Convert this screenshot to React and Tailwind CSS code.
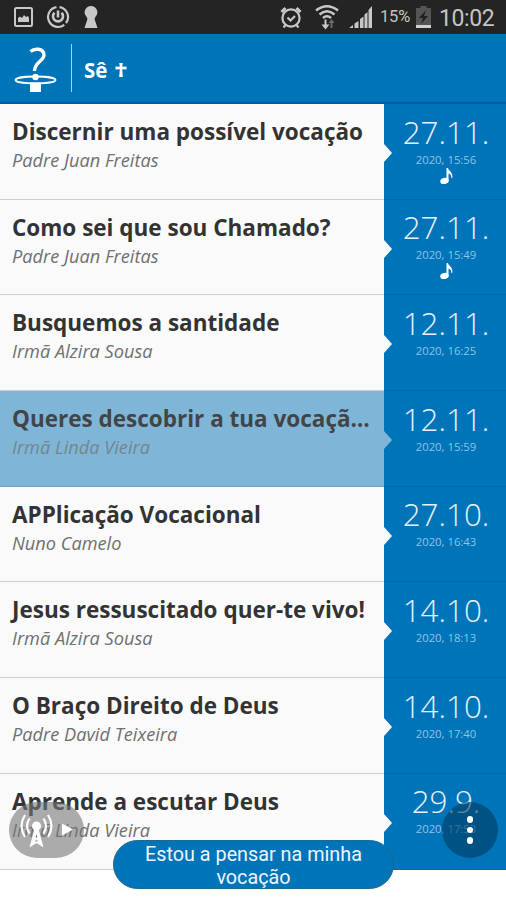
const items = [
  { title: "Discernir uma possível vocação", author: "Padre Juan Freitas", day: "27.11.", time: "2020, 15:56", audio: true },
  { title: "Como sei que sou Chamado?", author: "Padre Juan Freitas", day: "27.11.", time: "2020, 15:49", audio: true },
  { title: "Busquemos a santidade", author: "Irmã Alzira Sousa", day: "12.11.", time: "2020, 16:25" },
  { title: "Queres descobrir a tua vocação?", author: "Irmã Linda Vieira", day: "12.11.", time: "2020, 15:59", selected: true },
  { title: "APPlicação Vocacional", author: "Nuno Camelo", day: "27.10.", time: "2020, 16:43" },
  { title: "Jesus ressuscitado quer-te vivo!", author: "Irmã Alzira Sousa", day: "14.10.", time: "2020, 18:13" },
  { title: "O Braço Direito de Deus", author: "Padre David Teixeira", day: "14.10.", time: "2020, 17:40" },
  { title: "Aprende a escutar Deus", author: "Irmã Linda Vieira", day: "29.9.", time: "2020, 17:53" },
];

function StatusBar() {
  return (
    <div className="flex h-[34px] items-center bg-[#242424] pl-[14px] pr-3 font-['Roboto',sans-serif] text-[#c4c4c4]">
      <svg className="h-[22px] w-5" viewBox="0 0 20 22" fill="none">
        <rect x="1" y="2" width="17" height="18" rx="1.5" stroke="#c8c8c8" strokeWidth="2" />
        <path d="M4 16v-4l2-1.500 2 1.500 2-3 2 2 2-1 1 2v4z" fill="#c8c8c8" />
      </svg>
      <svg className="ml-3 h-6 w-6" viewBox="0 0 24 24" fill="none" stroke="#c8c8c8" strokeWidth="2.2">
        <path d="M13.5 2.1A10 10 0 0 1 20 18M18.3 19.8A10 10 0 1 1 10.5 2.1" />
        <path d="M8.500 7.800a5 5 0 1 0 7 0M12 5.500v7" strokeWidth="2.600" />
      </svg>
      <svg className="ml-[13px] h-6 w-4" viewBox="0 0 16 24" fill="#c8c8c8">
        <path d="M8 1a6.300 6.300 0 0 0-4.500 10.700L4.500 14 1.500 23h13l-3-9 1-2.300A6.300 6.300 0 0 0 8 1z" />
      </svg>
      <div className="ml-auto flex items-center">
        <svg className="h-6 w-[22px]" viewBox="0 0 22 24" fill="none" stroke="#c8c8c8" strokeWidth="2.2">
          <circle cx="11" cy="13" r="8.600" />
          <path d="M7.500 12.500l3 3 4.500-4.500M5.500 20l-2 2.500M16.500 20l2 2.500" />
          <path d="M1.500 7l4-4M20.500 7l-4-4" strokeWidth="3" />
        </svg>
        <svg className="ml-[13px] h-[26px] w-6" viewBox="0 0 24 26" fill="none">
          <path d="M1 6.500Q12-2 23 6.500M4.500 10.500Q12 4 19.500 10.500M8 14Q12 10.500 16 14" stroke="#c8c8c8" strokeWidth="2.500" />
          <path d="M9.500 15.500v5H6.500l4 5 4-5h-3v-5z" fill="#c8c8c8" />
          <path d="M15.500 24v-5h-2l3-4 3 4h-2v5z" fill="#6b6b6b" />
        </svg>
        <svg className="ml-[10px] h-6 w-[23px]" viewBox="0 0 23 24" fill="#c8c8c8">
          <path d="M0 23l4-3v3zM5.500 18.500l4-2.500v7h-4zM11 14l3.500-2.500V23H11zM15.500 9.500l3-2.500v16h-3zM19.500 5L23 1v22h-3.500z" />
        </svg>
        <span className="ml-[8px] mt-px w-[32px] whitespace-nowrap text-[16.5px] leading-none tracking-[-0.2px]">15%</span>
        <svg className="ml-1 h-6 w-[15px]" viewBox="0 0 15 24">
          <path d="M4.500 1h6v2H15v20H0V3h4.500z" fill="#555" />
          <path d="M10 5l-7 8h4l-2 6 7-8H8z" fill="#1f1f1f" />
          <path d="M0 20h15v3H0z" fill="#d0d0d0" />
        </svg>
        <span className="ml-2 mt-0.5 w-[55px] whitespace-nowrap text-[23px] leading-none tracking-[-0.4px]">10:02</span>
      </div>
    </div>
  );
}

function Header() {
  return (
    <header className="flex h-[70px] items-center border-b-2 border-[#005a9f] bg-[#0074b8] pl-[14px]">
      <svg className="h-12 w-[43px]" viewBox="0 0 43 48" fill="none">
        <path d="M16.500 7.500C20 4.500 29.500 3.500 30 11C30 17 20.500 18 20.500 27" stroke="#fff" strokeWidth="3.400" />
        <ellipse cx="21.500" cy="36" rx="20" ry="3.500" stroke="#fff" strokeWidth="1.800" />
        <circle cx="21.500" cy="33" r="3.200" fill="#fff" />
        <path d="M16 38.500h11V48H16z" fill="#fff" />
      </svg>
      <div className="ml-3.5 h-12 w-px bg-[#a9d1ea]" />
      <h1 className="ml-3 mt-1 font-['Open_Sans',sans-serif] text-[20.5px] font-bold leading-none text-white">Sê</h1>
      <svg className="ml-2 mt-1 h-4 w-3" viewBox="0 0 12 16" fill="#fff">
        <path d="M4.200 1h3.600l-.6 3.800 4.300-.4v3.200l-4.300-.4.6 7.800H4.200l.6-7.800-4.300.4V4.400l4.300.4z" />
      </svg>
    </header>
  );
}

function Item({ title, author, day, time, audio, selected }) {
  return (
    <li className="flex h-[95.7px]">
      <div
        className={
          selected
            ? "relative w-[384px] border-b border-[#6fa3c2] bg-[#7fb6d8] pl-2.5 pt-2.5"
            : "relative w-[384px] border-b border-[#cfcfcf] bg-[#fafafa] pl-2.5 pt-2.5"
        }
      >
        <h2
          className={
            selected
              ? "w-[364px] truncate pl-0.5 text-[22.5px] font-bold leading-9 text-[#424548]"
              : "w-[364px] truncate pl-0.5 text-[22.5px] font-bold leading-9 text-[#333]"
          }
        >
          {title}
        </h2>
        <p
          className={
            selected
              ? "pl-0.5 text-[18.2px] italic leading-5 text-[#75858f]"
              : "pl-0.5 text-[18.2px] italic leading-5 text-[#707070]"
          }
        >
          {author}
        </p>
        <svg className="absolute left-[383px] top-10 h-[18px] w-[9px]" viewBox="0 0 9 18">
          <path d="M0 0h1l8 9-8 9H0z" fill={selected ? "#7fb6d8" : "#fafafa"} />
        </svg>
      </div>
      <div className="flex flex-1 flex-col items-center border-b border-[#0068a6] bg-[#0074b8] pt-[7.5px] pl-0.5">
        <span className="text-[31.4px] font-light leading-10 text-[#e6f1fa]">{day}</span>
        <span className="text-[11.3px] leading-4 text-[#8fc3e6]">{time}</span>
        {audio && (
          <svg className="h-4 w-[13px]" viewBox="0 0 13 16" fill="#fff">
            <ellipse cx="4.500" cy="13" rx="4.300" ry="3" transform="rotate(-15 4.500 13)" />
            <path d="M6.500 0H8c.2 3 5.500 4 4.200 10h-.9C11.500 7 10 6 8.500 5.500V13H6.500z" />
          </svg>
        )}
      </div>
    </li>
  );
}

export default function App() {
  return (
    <div className="relative h-[900px] w-[506px] overflow-hidden bg-white">
      <StatusBar />
      <Header />
      <ul className="font-['Open_Sans','Noto_Sans',sans-serif]">
        {items.map((item) => (
          <Item key={item.title} {...item} />
        ))}
      </ul>

      <button className="absolute left-[9px] top-[802px] h-14 w-[75px] rounded-full bg-[#777]/60">
        <svg className="h-14 w-[75px]" viewBox="0 0 75 56" fill="none">
          <circle cx="27.500" cy="24" r="4.500" fill="#fff" />
          <path
            fillRule="evenodd"
            d="M25.500 27h4l5 18.500-7-4.500-7 4.500zM27.500 32l-1 4h2zM27.500 37.500l-2 2h4z"
            fill="#fff"
          />
          <path
            d="M20.500 16.500q-5 7.500 0 15M34.500 16.500q5 7.500 0 15M16 13q-7 11 0 22M39 13q7 11 0 22"
            stroke="#fff"
            strokeWidth="2.200"
          />
          <path d="M53 21.500l11 6-11 6z" fill="#fff" />
        </svg>
      </button>

      <button className="absolute left-[442px] top-[802px] flex h-14 w-14 flex-col items-center justify-center gap-1 rounded-full bg-[#003a61]/60">
        <i className="h-[6.5px] w-[6.5px] rounded-full bg-white" />
        <i className="h-[6.5px] w-[6.5px] rounded-full bg-white" />
        <i className="h-[6.5px] w-[6.5px] rounded-full bg-white" />
      </button>

      <div className="absolute left-[113px] top-[840px] flex h-[49px] w-[281px] items-center justify-center rounded-full border border-[#1f6690] bg-[#0074b8] px-7 pt-[3px] text-center font-['Roboto',sans-serif] text-[19.8px] leading-[23px] text-[#eef6fc]">
        Estou a pensar na minha vocação
      </div>
    </div>
  );
}
